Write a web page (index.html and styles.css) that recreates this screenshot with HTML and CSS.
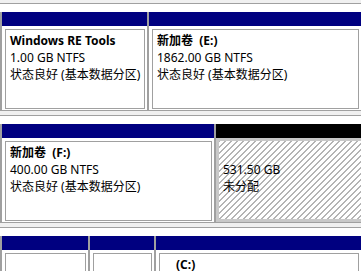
FILE: index.html
```html
<!DOCTYPE html>
<html lang="zh-CN">
<head>
    <meta charset="UTF-8">
    <title>磁盘管理</title>
    <link rel="stylesheet" href="styles.css">
</head>
<body>
    <div class="disk">
        <div class="parts">
            <div class="part w145">
                <div class="bar"></div>
                <div class="body">
                    <div class="frame">
                        <div class="name">Windows RE Tools</div>
                        <div>1.00 GB NTFS</div>
                        <div>状态良好 (基本数据分区)</div>
                    </div>
                </div>
            </div>
            <div class="part grow">
                <div class="bar"></div>
                <div class="body">
                    <div class="frame">
                        <div class="name">新加卷 &nbsp;(E:)</div>
                        <div>1862.00 GB NTFS</div>
                        <div>状态良好 (基本数据分区)</div>
                    </div>
                </div>
            </div>
        </div>
    </div>

    <div class="disk">
        <div class="parts">
            <div class="part w212">
                <div class="bar"></div>
                <div class="body">
                    <div class="frame">
                        <div class="name">新加卷 &nbsp;(F:)</div>
                        <div>400.00 GB NTFS</div>
                        <div>状态良好 (基本数据分区)</div>
                    </div>
                </div>
            </div>
            <div class="part grow">
                <div class="bar free"></div>
                <div class="body selected">
                    <div class="hatch">
                        <div>&nbsp;</div>
                        <div>531.50 GB</div>
                        <div>未分配</div>
                    </div>
                </div>
            </div>
        </div>
    </div>

    <div class="disk">
        <div class="parts">
            <div class="part w86">
                <div class="bar"></div>
                <div class="body"><div class="frame"></div></div>
            </div>
            <div class="part w64">
                <div class="bar"></div>
                <div class="body"><div class="frame"></div></div>
            </div>
            <div class="part grow">
                <div class="bar"></div>
                <div class="body">
                    <div class="frame">
                        <div class="name indent">(C:)</div>
                    </div>
                </div>
            </div>
        </div>
    </div>
</body>
</html>
```

FILE: styles.css
```css
body {
    margin: 0;
    padding-top: 3px;
    background-color: #f0f0f0;
    font-family: "Noto Sans", "Noto Sans CJK SC", sans-serif;
    font-size: 12px;
    line-height: 17px;
    color: #000;
    overflow: hidden;
}
.disk {
    background-color: #fff;
    border-top: 1px solid #a0a0a0;
    border-bottom: 1px solid #a0a0a0;
    padding-top: 8px;
    margin-bottom: 4px;
}
.parts {
    display: flex;
    gap: 2px;
    padding-left: 2px;
    background-color: #a0a0a0;
}
.part {
    display: flex;
    flex-direction: column;
    background-color: #fff;
}
.w145 { width: 145px; }
.w212 { width: 212px; }
.w86 { width: 86px; }
.w64 { width: 64px; }
.grow { flex: 1; }
.bar {
    height: 14px;
    background-color: #000080;
}
.bar.free {
    background-color: #000;
}
.body {
    padding: 3px 2px 1px 3px;
}
.frame {
    box-sizing: border-box;
    height: 80px;
    border: 1px solid #a0a0a0;
    padding: 2px 4px;
    white-space: nowrap;
    overflow: hidden;
}
.name {
    font-weight: bold;
}
.indent {
    padding-left: 12px;
}
.body.selected {
    padding: 0;
}
.hatch {
    box-sizing: border-box;
    height: 84px;
    border: 3px solid #c8c8c8;
    border-right: 0;
    padding: 3px 4px;
    white-space: nowrap;
    background-color: #fff;
    background-image: repeating-linear-gradient(135deg, #b4b4b4 0, #b4b4b4 1px, transparent 1px, transparent 4.24px);
}
```
